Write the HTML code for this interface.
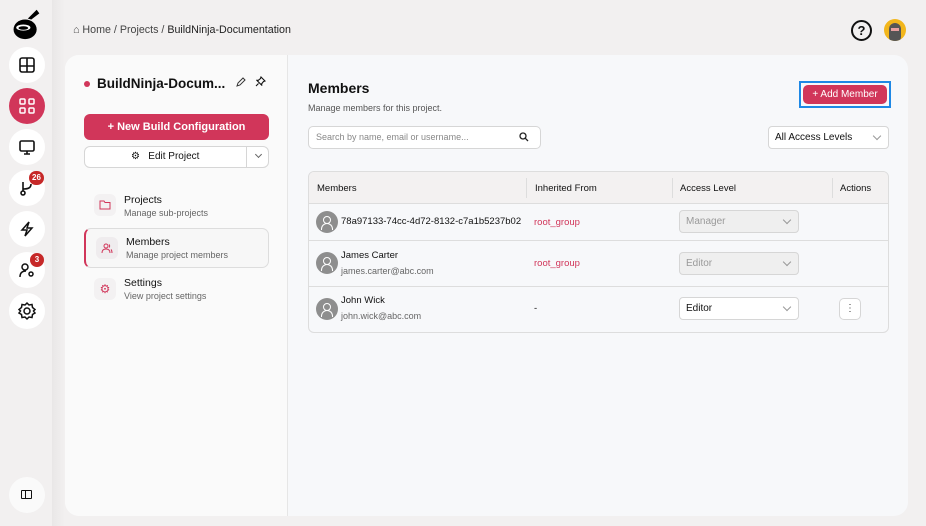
<!DOCTYPE html>
<html><head><meta charset="utf-8"><style>
*{box-sizing:border-box;margin:0;padding:0}
body{width:926px;height:526px;overflow:hidden;background:#f2f0f0;font-family:"Liberation Sans",sans-serif;position:relative;color:#111}
.a{position:absolute}
.ic{position:absolute;left:9px;width:36px;height:36px;border-radius:50%;background:#fff;display:flex;align-items:center;justify-content:center}
.badge{position:absolute;background:#c62828;color:#fff;font-size:8px;font-weight:bold;border-radius:8px;height:14px;min-width:14px;text-align:center;line-height:14px;padding:0 3px}
.sel{position:absolute;height:23px;border:1px solid #d6d6d6;border-radius:4px;font-size:10px;padding:5px 6px}
.chev{position:absolute;right:8px;top:6px;width:6px;height:6px;border-right:1px solid #999;border-bottom:1px solid #999;transform:rotate(45deg)}
.av{position:absolute;width:22px;height:22px;border-radius:50%;background:#8e8e8e;overflow:hidden}
.av::before{content:"";position:absolute;left:7px;top:5px;width:6px;height:6px;border:1.2px solid #fff;border-radius:50%}
.av::after{content:"";position:absolute;left:5px;top:12px;width:10px;height:6px;border:1.2px solid #fff;border-bottom:none;border-radius:6px 6px 0 0}
</style></head><body>
<div class="a" style="left:52px;top:0;width:13px;height:526px;background:linear-gradient(90deg,#e9e7e7,#f2f0f0)"></div>
<svg class="a" style="left:10px;top:6px" width="32" height="36" viewBox="0 0 36 40"><ellipse cx="17" cy="26" rx="13" ry="11" fill="#000"/><path d="M20 14 L30 4 L33 8 L24 15 Z" fill="#000"/><ellipse cx="15" cy="24" rx="8" ry="3.5" fill="#fff"/><ellipse cx="15" cy="24.5" rx="5.5" ry="2" fill="#000"/></svg>
<div class="ic" style="top:47px"><svg width="18" height="18" viewBox="0 0 18 18" fill="none" stroke="#111" stroke-width="1.6"><rect x="2" y="2" width="14" height="14" rx="2"/><path d="M2 10H16M9 2V16"/></svg></div>
<div class="ic" style="top:88px;background:#d1365a"><svg width="18" height="18" viewBox="0 0 18 18" fill="none" stroke="#fff" stroke-width="1.5"><rect x="2" y="2" width="5" height="5" rx="1"/><rect x="11" y="2" width="5" height="5" rx="1"/><rect x="2" y="11" width="5" height="5" rx="1"/><rect x="11" y="11" width="5" height="5" rx="1"/></svg></div>
<div class="ic" style="top:129px"><svg width="18" height="18" viewBox="0 0 18 18" fill="none" stroke="#111" stroke-width="1.6"><rect x="2" y="3" width="14" height="10" rx="1.5"/><path d="M9 13V16M6 16H12"/></svg></div>
<div class="ic" style="top:170px"><svg width="18" height="18" viewBox="0 0 18 18" fill="none" stroke="#111" stroke-width="1.6"><circle cx="5" cy="14" r="2"/><path d="M5 12V3M5 10C10 10 13 9 13 5"/></svg></div>
<div class="badge" style="left:29px;top:171px">26</div>
<div class="ic" style="top:211px"><svg width="18" height="18" viewBox="0 0 18 18" fill="none" stroke="#111" stroke-width="1.5"><path d="M11 2L4 10H9L7 16L14 8H9Z"/></svg></div>
<div class="ic" style="top:252px"><svg width="18" height="18" viewBox="0 0 18 18" fill="none" stroke="#111" stroke-width="1.5"><circle cx="7" cy="6" r="3"/><path d="M2 16C2 12 4 10 8 10"/><circle cx="13" cy="13" r="2"/></svg></div>
<div class="badge" style="left:30px;top:253px">3</div>
<div class="ic" style="top:293px"><svg width="20" height="20" viewBox="0 0 20 20" fill="none" stroke="#111" stroke-width="1.5"><circle cx="10" cy="10" r="3"/><path d="M10 2L12 4L15 3.5L15.5 6.5L18 8.5L16.5 10L18 12L15.5 13.5L15 16.5L12 16L10 18L8 16L5 16.5L4.5 13.5L2 12L3.5 10L2 8.5L4.5 6.5L5 3.5L8 4Z"/></svg></div>
<div class="a" style="left:9px;top:477px;width:36px;height:36px;border-radius:50%;background:#fafafa"><div class="a" style="left:12px;top:13px;width:11px;height:9px;border:1.3px solid #111;border-radius:1px"></div><div class="a" style="left:16px;top:13px;width:1.3px;height:9px;background:#111"></div></div>

<div class="a" style="left:73px;top:24px;font-size:10.7px;color:#444">⌂ Home / Projects / <span style="color:#222">BuildNinja-Documentation</span></div>
<div class="a" style="left:851px;top:20px;width:21px;height:21px;border:2px solid #111;border-radius:50%;text-align:center;font-size:13px;font-weight:bold;line-height:17px">?</div>
<div class="a" style="left:884px;top:19px;width:22px;height:22px;border-radius:50%;background:#f2b61c;overflow:hidden"><div class="a" style="left:5px;top:4px;width:12px;height:20px;border-radius:6px;background:#555"></div><div class="a" style="left:7px;top:9px;width:8px;height:3px;background:#e8a0a0"></div></div>

<div class="a" style="left:65px;top:55px;width:843px;height:461px;border-radius:14px;overflow:hidden;background:#f7f8fa">
<div class="a" style="left:0;top:0;width:223px;height:461px;background:#fafafa;border-right:1px solid #e6e6e6"></div>
</div>
<div class="a" style="left:84px;top:81px;width:6px;height:6px;border-radius:50%;background:#d1365a"></div>
<div class="a" style="left:97px;top:76px;font-size:13.5px;font-weight:bold">BuildNinja-Docum...</div>
<svg class="a" style="left:236px;top:77px" width="10" height="10" viewBox="0 0 10 10" fill="none" stroke="#333"><path d="M1 9L2 6L7 1L9 3L4 8Z"/></svg>
<svg class="a" style="left:255px;top:76px" width="11" height="11" viewBox="0 0 11 11" fill="none" stroke="#111" stroke-width="1.1"><path d="M6 1L10 5L8.5 5.5L6.5 8L7 9.5L1.5 4L3 4.5L5.5 2.5Z M3.5 7.5L1 10"/></svg>
<div class="a" style="left:84px;top:114px;width:185px;height:26px;border-radius:6px;background:#d1365a;color:#fff;font-size:11px;font-weight:bold;text-align:center;line-height:26px">+ New Build Configuration</div>
<div class="a" style="left:84px;top:146px;width:185px;height:22px;border:1px solid #d6d6d6;border-radius:6px;background:#fff;font-size:10px;line-height:20px"><span class="a" style="left:46px;top:0">⚙&nbsp;&nbsp;&nbsp;Edit Project</span><div class="a" style="left:161px;top:0;width:1px;height:20px;background:#d6d6d6"></div><div class="a" style="left:171px;top:5px;width:5px;height:5px;border-right:1px solid #666;border-bottom:1px solid #666;transform:rotate(45deg)"></div></div>
<div class="a" style="left:94px;top:194px;width:22px;height:22px;border-radius:6px;background:#f3f1f2"><svg style="position:absolute;left:5px;top:6px" width="12" height="10" viewBox="0 0 12 10" fill="none" stroke="#d1365a"><path d="M1 1H5L6 2.5H11V9H1Z"/></svg></div>
<div class="a" style="left:124px;top:194px;font-size:10.5px">Projects</div>
<div class="a" style="left:124px;top:208px;font-size:9px;color:#666">Manage sub-projects</div>
<div class="a" style="left:84px;top:228px;width:185px;height:40px;border:1px solid #ddd;border-left:2px solid #d1365a;border-radius:7px;background:#f7f7f7"></div>
<div class="a" style="left:96px;top:237px;width:22px;height:22px;border-radius:6px;background:#efecee"><svg style="position:absolute;left:5px;top:5px" width="12" height="12" viewBox="0 0 12 12" fill="none" stroke="#d1365a"><circle cx="5" cy="4" r="2"/><path d="M1 11C1 8 3 7 5 7S9 8 9 11"/><path d="M8 2.5A2 2 0 0 1 8 5.5M10 7.5C11 8.5 11 10 11 11"/></svg></div>
<div class="a" style="left:126px;top:236px;font-size:10.5px">Members</div>
<div class="a" style="left:126px;top:250px;font-size:9px;color:#666">Manage project members</div>
<div class="a" style="left:94px;top:278px;width:22px;height:22px;border-radius:6px;background:#f3f1f2;color:#d1365a;font-size:12px;text-align:center;line-height:22px">⚙</div>
<div class="a" style="left:124px;top:277px;font-size:10.5px">Settings</div>
<div class="a" style="left:124px;top:291px;font-size:9px;color:#666">View project settings</div>

<div class="a" style="left:308px;top:80px;font-size:14px;font-weight:bold">Members</div>
<div class="a" style="left:308px;top:103px;font-size:9px;color:#555">Manage members for this project.</div>
<div class="a" style="left:799px;top:81px;width:92px;height:27px;border:2px solid #1e88e5"><div class="a" style="left:2px;top:2px;width:84px;height:19px;border-radius:5px;background:#d1365a;color:#fff;font-size:10px;text-align:center;line-height:19px">+ Add Member</div></div>
<div class="a" style="left:308px;top:126px;width:233px;height:23px;border:1px solid #d6d6d6;border-radius:5px;background:#fff;font-size:9px;color:#888;padding:5px 7px">Search by name, email or username...<svg class="a" style="right:11px;top:5px" width="10" height="10" viewBox="0 0 10 10" fill="none" stroke="#222" stroke-width="1.3"><circle cx="4" cy="4" r="3"/><path d="M6.2 6.2L9 9"/></svg></div>
<div class="sel" style="left:768px;top:126px;width:121px;background:#fff">All Access Levels<div class="chev"></div></div>
<div class="a" style="left:308px;top:171px;width:581px;height:162px;border:1px solid #ddd;border-radius:6px;background:#f7f8fa;overflow:hidden">
<div class="a" style="left:0;top:0;width:581px;height:32px;background:#f3f1f1;border-bottom:1px solid #ddd"></div>
<div class="a" style="left:217px;top:6px;width:1px;height:20px;background:#ddd"></div>
<div class="a" style="left:363px;top:6px;width:1px;height:20px;background:#ddd"></div>
<div class="a" style="left:523px;top:6px;width:1px;height:20px;background:#ddd"></div>
<div class="a" style="left:0;top:68px;width:581px;height:1px;background:#ddd"></div>
<div class="a" style="left:0;top:114px;width:581px;height:1px;background:#ddd"></div>
</div>
<div class="a" style="left:317px;top:183px;font-size:9.5px">Members</div>
<div class="a" style="left:535px;top:183px;font-size:9.5px">Inherited From</div>
<div class="a" style="left:680px;top:183px;font-size:9.5px">Access Level</div>
<div class="a" style="left:840px;top:183px;font-size:9.5px">Actions</div>
<div class="av" style="left:316px;top:211px"></div>
<div class="a" style="left:341px;top:216px;font-size:9.5px">78a97133-74cc-4d72-8132-c7a1b5237b02</div>
<div class="a" style="left:534px;top:217px;font-size:9.5px;color:#d1365a">root_group</div>
<div class="sel" style="left:679px;top:210px;width:120px;background:#efefef;color:#999">Manager<div class="chev"></div></div>
<div class="av" style="left:316px;top:252px"></div>
<div class="a" style="left:341px;top:250px;font-size:9.5px">James Carter</div>
<div class="a" style="left:341px;top:266px;font-size:9px;color:#666">james.carter@abc.com</div>
<div class="a" style="left:534px;top:258px;font-size:9.5px;color:#d1365a">root_group</div>
<div class="sel" style="left:679px;top:252px;width:120px;background:#efefef;color:#999">Editor<div class="chev"></div></div>
<div class="av" style="left:316px;top:298px"></div>
<div class="a" style="left:341px;top:295px;font-size:9.5px">John Wick</div>
<div class="a" style="left:341px;top:311px;font-size:9px;color:#666">john.wick@abc.com</div>
<div class="a" style="left:534px;top:303px;font-size:9.5px">-</div>
<div class="sel" style="left:679px;top:297px;width:120px;background:#fff">Editor<div class="chev"></div></div>
<div class="a" style="left:839px;top:298px;width:22px;height:22px;border:1px solid #d6d6d6;border-radius:5px;background:#fff;font-size:10px;text-align:center;line-height:20px;color:#444">⋮</div>
</body></html>
